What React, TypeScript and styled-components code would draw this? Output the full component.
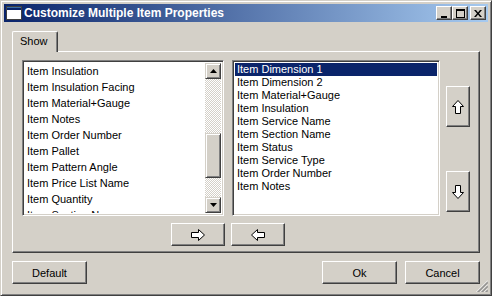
import React from "react";
import styled, { createGlobalStyle } from "styled-components";

const Global = createGlobalStyle`
  html, body { margin: 0; padding: 0; background: #d4d0c8; }
  body { font-family: Tahoma, "Liberation Sans", Arial, sans-serif; font-size: 11px; color: #000; }
`;

const FACE = "#d4d0c8";

const Window = styled.div`
  position: relative;
  box-sizing: border-box;
  width: 492px;
  height: 296px;
  background: ${FACE};
  border: 1px solid;
  border-color: ${FACE} #404040 #404040 ${FACE};
  box-shadow: inset 1px 1px #fff, inset -1px -1px #808080;
  padding: 3px;
  display: flex;
  flex-direction: column;
`;

const TitleBar = styled.div`
  height: 18px;
  display: flex;
  align-items: center;
  padding: 0 2px 0 2px;
  background: linear-gradient(to right, #0a246a, #a6caf0);
`;

const Title = styled.span`
  color: #fff;
  font-weight: bold;
  font-size: 12px;
  margin-left: 2px;
  flex: 1;
  white-space: nowrap;
`;

const CaptionGroup = styled.div`
  display: flex;
  align-items: center;
`;

const CaptionButton = styled.div<{ $gap?: number }>`
  box-sizing: border-box;
  width: 16px;
  height: 14px;
  margin-left: ${(p) => p.$gap ?? 0}px;
  background: ${FACE};
  border: 1px solid;
  border-color: #fff #404040 #404040 #fff;
  box-shadow: inset -1px -1px #808080;
  display: flex;
  align-items: center;
  justify-content: center;
`;

const Body = styled.div`
  flex: 1;
  display: flex;
  flex-direction: column;
  padding: 9px 8px 0 8px;
`;

const TabStrip = styled.div`
  display: flex;
  height: 20px;
  position: relative;
  z-index: 1;
`;

const Tab = styled.div`
  box-sizing: border-box;
  width: 46px;
  height: 21px;
  padding: 3px 0 0 7px;
  background: ${FACE};
  border-left: 1px solid #fff;
  border-top: 1px solid #fff;
  border-right: 1px solid #404040;
  border-top-left-radius: 2px;
  border-top-right-radius: 2px;
  box-shadow: inset -1px 0 #808080;
  font-size: 11px;
`;

const Pane = styled.div`
  box-sizing: border-box;
  width: 468px;
  height: 202px;
  border: 1px solid;
  border-color: #fff #404040 #404040 #fff;
  box-shadow: inset -1px -1px #808080;
  padding: 8px 0 0 9px;
  display: flex;
  flex-direction: column;
`;

const ListsRow = styled.div`
  display: flex;
  height: 156px;
`;

const ListBox = styled.div<{ $w: number; $ml?: number }>`
  box-sizing: border-box;
  width: ${(p) => p.$w}px;
  height: 156px;
  margin-left: ${(p) => p.$ml ?? 0}px;
  background: #fff;
  border: 1px solid;
  border-color: #808080 #fff #fff #808080;
  box-shadow: inset 1px 1px #404040, inset -1px -1px ${FACE};
  padding: 2px;
  display: flex;
  overflow: hidden;
`;

const Items = styled.div`
  flex: 1;
  overflow: hidden;
`;

const Row = styled.div<{ $h: number; $sel?: boolean }>`
  height: ${(p) => p.$h}px;
  line-height: ${(p) => p.$h}px;
  padding-left: 2px;
  white-space: nowrap;
  font-size: 11px;
  background: ${(p) => (p.$sel ? "#0a246a" : "transparent")};
  color: ${(p) => (p.$sel ? "#fff" : "#000")};
`;

const ScrollBar = styled.div`
  width: 16px;
  display: flex;
  flex-direction: column;
  background: repeating-conic-gradient(${FACE} 0% 25%, #fff 0% 50%) 0 0 / 2px 2px;
`;

const ScrollButton = styled.div<{ $h?: number; $mt?: number }>`
  box-sizing: border-box;
  width: 16px;
  height: ${(p) => p.$h ?? 16}px;
  margin-top: ${(p) => p.$mt ?? 0}px;
  background: ${FACE};
  border: 1px solid;
  border-color: ${FACE} #404040 #404040 ${FACE};
  box-shadow: inset 1px 1px #fff, inset -1px -1px #808080;
  display: flex;
  align-items: center;
  justify-content: center;
`;

const OrderColumn = styled.div`
  display: flex;
  flex-direction: column;
  margin-left: 6px;
  padding-top: 26px;
`;

const RaisedButton = styled.button<{ $w: number; $h: number; $mt?: number; $ml?: number }>`
  box-sizing: border-box;
  width: ${(p) => p.$w}px;
  height: ${(p) => p.$h}px;
  margin: ${(p) => p.$mt ?? 0}px 0 0 ${(p) => p.$ml ?? 0}px;
  padding: 0;
  background: ${FACE};
  border: 1px solid;
  border-color: #fff #404040 #404040 #fff;
  box-shadow: inset -1px -1px #808080;
  font-family: inherit;
  font-size: 11px;
  color: #000;
  display: flex;
  align-items: center;
  justify-content: center;
`;

const TransferRow = styled.div`
  display: flex;
  margin: 7px 0 0 149px;
`;

const Footer = styled.div`
  display: flex;
  margin-top: 8px;
`;

const Spacer = styled.div`
  flex: 1;
`;

const Grip = styled.svg`
  position: absolute;
  right: 3px;
  bottom: 3px;
`;

const leftItems = [
  "Item Insulation",
  "Item Insulation Facing",
  "Item Material+Gauge",
  "Item Notes",
  "Item Order Number",
  "Item Pallet",
  "Item Pattern Angle",
  "Item Price List Name",
  "Item Quantity",
  "Item Section Name",
];

const rightItems = [
  "Item Dimension 1",
  "Item Dimension 2",
  "Item Material+Gauge",
  "Item Insulation",
  "Item Service Name",
  "Item Section Name",
  "Item Status",
  "Item Service Type",
  "Item Order Number",
  "Item Notes",
];

const AppIcon = () => (
  <svg width="16" height="14" viewBox="0 0 16 14">
    <rect x="0.5" y="0.5" width="15" height="13" fill="#fff" stroke="#404040" />
    <rect x="1" y="1" width="14" height="3" fill="#0a246a" />
    <rect x="1" y="1" width="14" height="1" fill="#3a6ea5" />
  </svg>
);

const Arrow = ({ dir }: { dir: "up" | "down" | "left" | "right" }) => {
  const rot = { up: 0, right: 90, down: 180, left: 270 }[dir];
  return (
    <svg width="14" height="14" viewBox="0 0 14 14">
      <g transform={`rotate(${rot} 7 7)`}>
        <polygon
          points="7,0.5 12.5,6.5 9.5,6.5 9.5,13.5 4.5,13.5 4.5,6.5 1.5,6.5"
          fill="#fff"
          stroke="#000"
          strokeWidth="1"
        />
      </g>
    </svg>
  );
};

const Tri = ({ up }: { up: boolean }) => (
  <svg width="7" height="4" viewBox="0 0 7 4">
    <polygon points={up ? "3.5,0 7,4 0,4" : "0,0 7,0 3.5,4"} fill="#000" />
  </svg>
);

export default function App() {
  return (
    <>
      <Global />
      <Window>
        <TitleBar>
          <AppIcon />
          <Title>Customize Multiple Item Properties</Title>
          <CaptionGroup>
            <CaptionButton>
              <svg width="8" height="9" viewBox="0 0 8 9">
                <rect x="1" y="7" width="6" height="2" fill="#000" />
              </svg>
            </CaptionButton>
            <CaptionButton>
              <svg width="9" height="9" viewBox="0 0 9 9">
                <rect x="0.5" y="0.5" width="8" height="8" fill="none" stroke="#000" />
                <rect x="0" y="0" width="9" height="2" fill="#000" />
              </svg>
            </CaptionButton>
            <CaptionButton $gap={2}>
              <svg width="8" height="7" viewBox="0 0 8 7">
                <path d="M0 0 L2 0 L4 2.5 L6 0 L8 0 L5 3.5 L8 7 L6 7 L4 4.5 L2 7 L0 7 L3 3.5 Z" fill="#000" />
              </svg>
            </CaptionButton>
          </CaptionGroup>
        </TitleBar>
        <Body>
          <TabStrip>
            <Tab>Show</Tab>
          </TabStrip>
          <Pane>
            <ListsRow>
              <ListBox $w={202}>
                <Items>
                  {leftItems.map((t) => (
                    <Row key={t} $h={16}>
                      {t}
                    </Row>
                  ))}
                </Items>
                <ScrollBar>
                  <ScrollButton>
                    <Tri up />
                  </ScrollButton>
                  <ScrollButton $h={45} $mt={54} />
                  <Spacer />
                  <ScrollButton>
                    <Tri up={false} />
                  </ScrollButton>
                </ScrollBar>
              </ListBox>
              <ListBox $w={208} $ml={8}>
                <Items>
                  {rightItems.map((t, i) => (
                    <Row key={t} $h={13} $sel={i === 0}>
                      {t}
                    </Row>
                  ))}
                </Items>
              </ListBox>
              <OrderColumn>
                <RaisedButton $w={24} $h={41}>
                  <Arrow dir="up" />
                </RaisedButton>
                <RaisedButton $w={24} $h={41} $mt={44}>
                  <Arrow dir="down" />
                </RaisedButton>
              </OrderColumn>
            </ListsRow>
            <TransferRow>
              <RaisedButton $w={54} $h={23}>
                <Arrow dir="right" />
              </RaisedButton>
              <RaisedButton $w={54} $h={23} $ml={6}>
                <Arrow dir="left" />
              </RaisedButton>
            </TransferRow>
          </Pane>
          <Footer>
            <RaisedButton $w={75} $h={23}>
              Default
            </RaisedButton>
            <Spacer />
            <RaisedButton $w={75} $h={23}>
              Ok
            </RaisedButton>
            <RaisedButton $w={75} $h={23} $ml={8}>
              Cancel
            </RaisedButton>
          </Footer>
        </Body>
        <Grip width="12" height="12" viewBox="0 0 12 12">
          {[0, 4, 8].map((o) => (
            <g key={o}>
              <line x1={12} y1={o + 0.5} x2={o + 0.5} y2={12} stroke="#fff" />
              <line x1={12} y1={o + 1.5} x2={o + 1.5} y2={12} stroke="#808080" />
              <line x1={12} y1={o + 2.5} x2={o + 2.5} y2={12} stroke="#808080" />
            </g>
          ))}
        </Grip>
      </Window>
    </>
  );
}
